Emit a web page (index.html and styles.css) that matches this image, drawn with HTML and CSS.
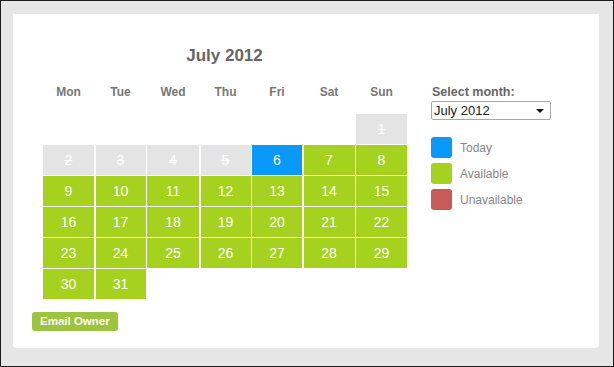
FILE: index.html
```html
<!DOCTYPE html>
<html>
<head>
<meta charset="utf-8">
<link rel="stylesheet" href="styles.css">
</head>
<body>
<div class="frame">
  <div class="panel">
    <div class="layout">
      <div class="cal">
        <div class="title">July 2012</div>
        <div class="days">
          <div>Mon</div><div>Tue</div><div>Wed</div><div>Thu</div><div>Fri</div><div>Sat</div><div>Sun</div>
        </div>
        <div class="grid">
          <div class="cell past first">1</div>
          <div class="cell past">2</div>
          <div class="cell past">3</div>
          <div class="cell past">4</div>
          <div class="cell past">5</div>
          <div class="cell today">6</div>
          <div class="cell avail">7</div>
          <div class="cell avail">8</div>
          <div class="cell avail">9</div>
          <div class="cell avail">10</div>
          <div class="cell avail">11</div>
          <div class="cell avail">12</div>
          <div class="cell avail">13</div>
          <div class="cell avail">14</div>
          <div class="cell avail">15</div>
          <div class="cell avail">16</div>
          <div class="cell avail">17</div>
          <div class="cell avail">18</div>
          <div class="cell avail">19</div>
          <div class="cell avail">20</div>
          <div class="cell avail">21</div>
          <div class="cell avail">22</div>
          <div class="cell avail">23</div>
          <div class="cell avail">24</div>
          <div class="cell avail">25</div>
          <div class="cell avail">26</div>
          <div class="cell avail">27</div>
          <div class="cell avail">28</div>
          <div class="cell avail">29</div>
          <div class="cell avail">30</div>
          <div class="cell avail">31</div>
        </div>
      </div>
      <div class="side">
        <div class="label">Select month:</div>
        <div class="select">
          <span>July 2012</span>
          <svg class="arrow" width="8" height="4" viewBox="0 0 8 4"><path d="M0 0H8L4 4Z" fill="#111"/></svg>
        </div>
        <div class="legend">
          <div class="item"><span class="sw sw-today"></span><span>Today</span></div>
          <div class="item"><span class="sw sw-avail"></span><span>Available</span></div>
          <div class="item"><span class="sw sw-unavail"></span><span>Unavailable</span></div>
        </div>
      </div>
    </div>
    <div class="btn">Email Owner</div>
  </div>
</div>
</body>
</html>
```

FILE: styles.css
```css
html, body {
  margin: 0;
  padding: 0;
}
body {
  font-family: "Liberation Sans", Arial, sans-serif;
}
.frame {
  width: 614px;
  height: 367px;
  box-sizing: border-box;
  border: 1px solid #1c1c1c;
  background: #e6e6e6;
  padding: 13px 0 0 12px;
}
.panel {
  width: 586px;
  height: 334px;
  box-sizing: border-box;
  background: #fff;
  border-radius: 0 0 4px 4px;
  padding: 32px 0 0 19px;
}
.layout {
  display: flex;
}
.cal {
  margin-left: 11px;
  width: 363px;
}
.title {
  text-align: center;
  font-size: 17px;
  line-height: 20px;
  font-weight: bold;
  color: #666;
}
.days {
  margin-top: 18px;
  display: grid;
  grid-template-columns: 51px 50px 52px 50px 50px 51px 51px;
  column-gap: 1.5px;
  font-size: 12px;
  line-height: 16px;
  font-weight: bold;
  color: #777;
  text-align: center;
}
.grid {
  margin-top: 14px;
  display: grid;
  grid-template-columns: 51px 50px 52px 50px 50px 51px 51px;
  grid-auto-rows: 30px;
  column-gap: 1.5px;
  row-gap: 1px;
}
.cell {
  display: flex;
  align-items: center;
  justify-content: center;
  font-size: 14px;
  color: #fff;
}
.first {
  grid-column-start: 7;
}
.past {
  background: #e4e4e4;
  text-decoration: line-through;
}
.today {
  background: #0899fb;
}
.avail {
  background: #a4d21e;
}
.side {
  margin-left: 25px;
  margin-top: 38px;
}
.label {
  font-size: 12.5px;
  line-height: 16px;
  font-weight: bold;
  color: #666;
  padding-left: 1px;
}
.select {
  margin-top: 1px;
  width: 120px;
  height: 19px;
  box-sizing: border-box;
  border: 1px solid #a8a8a8;
  border-radius: 2px;
  display: flex;
  align-items: center;
  justify-content: space-between;
  padding: 0 6px 0 2px;
  font-size: 13px;
  color: #222;
}
.arrow {
  display: block;
}
.legend {
  margin-top: 17px;
  display: flex;
  flex-direction: column;
  gap: 5px;
}
.item {
  display: flex;
  align-items: center;
  gap: 8px;
  font-size: 12px;
  color: #888;
}
.sw {
  width: 21px;
  height: 21px;
  border-radius: 3px;
}
.sw-today { background: #0899fb; }
.sw-avail { background: #a4d21e; }
.sw-unavail { background: #c85a5a; }
.btn {
  display: inline-block;
  margin-top: 13px;
  height: 19px;
  line-height: 19px;
  padding: 0 8px;
  background: #9cc43c;
  border-radius: 3px;
  color: #fff;
  font-size: 11.5px;
  font-weight: bold;
}
```
